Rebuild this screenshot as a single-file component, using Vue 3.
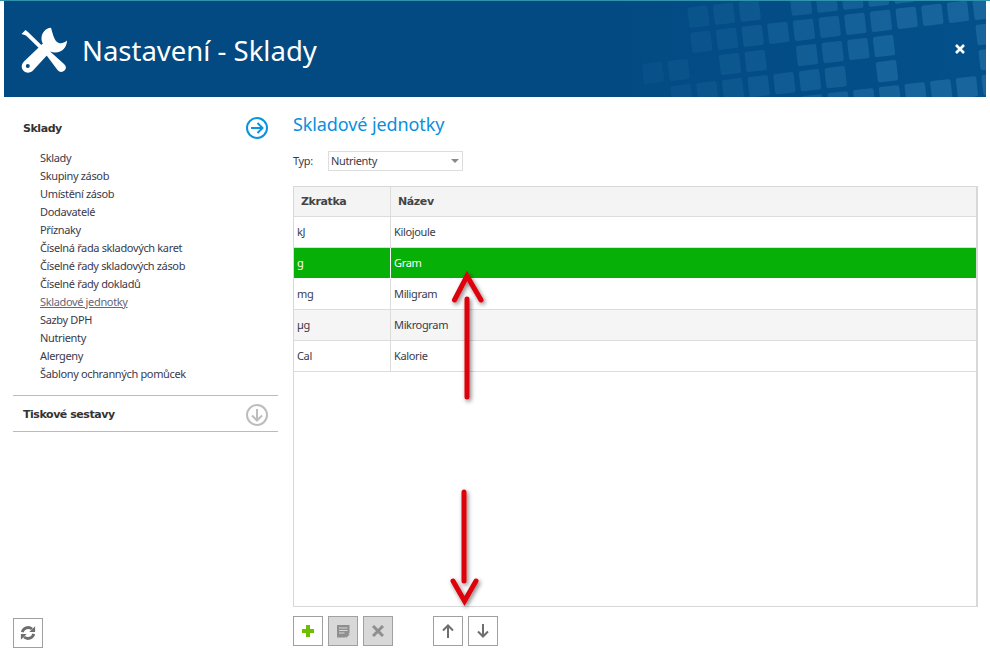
<script setup>
const menu = [
  'Sklady', 'Skupiny zásob', 'Umístění zásob', 'Dodavatelé', 'Příznaky',
  'Číselná řada skladových karet', 'Číselné řady skladových zásob', 'Číselné řady dokladů',
  'Skladové jednotky', 'Sazby DPH', 'Nutrienty', 'Alergeny', 'Šablony ochranných pomůcek'
]
const rows = [
  { code: 'kJ', name: 'Kilojoule', kind: '' },
  { code: 'g', name: 'Gram', kind: 'selected' },
  { code: 'mg', name: 'Miligram', kind: '' },
  { code: 'µg', name: 'Mikrogram', kind: 'striped' },
  { code: 'Cal', name: 'Kalorie', kind: '' }
]
const lattice = [
  [0, [0, 1, 2, 4, 5, 6, 7, 8]],
  [1, [0, 1, 2, 3, 4, 5, 6, 7, 8, 9, 10, 11]],
  [2, [-2, -1, 1, 2, 4, 5, 6, 7, 11]],
  [3, [-1, 0, 1, 2, 3, 4, 5, 7, 11]],
  [4, [4, 5, 6, 7, 8, 9, 10, 11]]
]
const squares = lattice.flatMap(([j, list]) => list.map((i) => {
  const x = 660 + (115 + 77 * i + 9 * j) / 3
  const y = (50 - 9 * i + 75.5 * j) / 3 - 1
  return { x, y, o: Math.min(0.46, 0.12 + (x - 660) * 0.0014) }
}))
</script>

<template>
  <div class="page">
    <div class="strip"></div>
    <header class="hero">
      <svg class="pattern" viewBox="0 0 982 96" width="982" height="96" aria-hidden="true">
        <rect
          v-for="(s, n) in squares"
          :key="n"
          :x="s.x - 4 - 10.25"
          :y="s.y - 10.25"
          width="20.5"
          height="20.5"
          rx="2.2"
          fill="#2f7fb3"
          :opacity="s.o"
          :transform="`rotate(-6.6 ${s.x - 4} ${s.y})`"
        />
      </svg>
      <svg class="tools" viewBox="0 0 46 46" width="46" height="46" aria-hidden="true">
        <path d="M0.5 7 L4.5 3 L7 5 L25 22.5 L22.5 25.5 L5 8.5 Z" fill="#fff" />
        <path d="M24.5 27 L28 23.5 L43 37 C45.5 39.5 45.5 41.5 43.5 43.5 C41.5 45.5 38.5 45.5 36.5 43 Z" fill="#fff" />
        <path d="M30 0.7 C24.5 1 20.5 6 20.5 11.5 C20.5 13.5 21 15 21.8 16.5 L3 34.5 C0 37.5 0 41.5 2.7 44 C5.5 46.5 9.5 46 12 43.5 L29.5 24.5 C31 25.2 33 25.5 34.5 25.5 C41 25.5 46 20 46 13.5 C42 17 38 17 35.5 14.5 C33 12 31.5 6 30 0.7 Z" fill="#fff" />
        <circle cx="6.8" cy="39" r="2" fill="#034a82" />
      </svg>
      <h1 class="title">Nastavení - Sklady</h1>
      <svg class="close" viewBox="0 0 10 10" width="10" height="10" aria-hidden="true">
        <path d="M1 1 L9 9 M9 1 L1 9" stroke="#fff" stroke-width="2.6" />
      </svg>
    </header>

    <div class="body">
      <aside class="side">
        <div class="side-top">
          <div class="section-head open">
            <span class="section-title">Sklady</span>
            <svg viewBox="0 0 24 24" width="24" height="24" aria-hidden="true">
              <circle cx="12" cy="12" r="10" fill="none" stroke="#0a94de" stroke-width="2" />
              <path d="M6 12 H17 M12.5 7 L17.5 12 L12.5 17" fill="none" stroke="#0a94de" stroke-width="2" />
            </svg>
          </div>
          <ul class="menu">
            <li v-for="item in menu" :key="item" :class="{ active: item === 'Skladové jednotky' }">{{ item }}</li>
          </ul>
          <div class="section-head closed">
            <span class="section-title">Tiskové sestavy</span>
            <svg viewBox="0 0 24 24" width="24" height="24" aria-hidden="true">
              <circle cx="12" cy="12" r="10" fill="none" stroke="#bdbdbd" stroke-width="2" />
              <path d="M12 6 V17 M7 12.5 L12 17.5 L17 12.5" fill="none" stroke="#bdbdbd" stroke-width="2" />
            </svg>
          </div>
        </div>
        <button class="btn refresh" type="button" aria-label="Obnovit">
          <svg viewBox="0 0 18 18" width="16" height="16">
            <path d="M2.5 8 A6.8 6.8 0 0 1 13.5 4.5 M15.5 10 A6.8 6.8 0 0 1 4.5 13.5" fill="none" stroke="#6e6e6e" stroke-width="3.2" />
            <path d="M17 1.5 V8 H10.5 Z M1 16.5 V10 H7.5 Z" fill="#6e6e6e" />
          </svg>
        </button>
      </aside>

      <main class="main">
        <h2 class="heading">Skladové jednotky</h2>
        <div class="filter">
          <label class="filter-label">Typ:</label>
          <div class="select">
            <span>Nutrienty</span>
            <i class="caret"></i>
          </div>
        </div>
        <div class="table">
          <div class="row head">
            <div class="cell first">Zkratka</div>
            <div class="cell">Název</div>
          </div>
          <div v-for="r in rows" :key="r.code" class="row" :class="r.kind">
            <div class="cell first">{{ r.code }}</div>
            <div class="cell">{{ r.name }}</div>
          </div>
        </div>
        <div class="toolbar">
          <button class="btn" type="button" aria-label="Přidat">
            <svg viewBox="0 0 12 12" width="12" height="12"><path d="M4 0 H8 V4 H12 V8 H8 V12 H4 V8 H0 V4 H4 Z" fill="#6fbf00" /></svg>
          </button>
          <button class="btn off" type="button" aria-label="Upravit">
            <svg viewBox="0 0 13 13" width="13" height="13">
              <path d="M0 0 H12.5 V8 L8 12.5 H0 Z" fill="#8f8f8f" />
              <path d="M2 3 H10.5 M2 5.5 H10.5 M2 8 H7.5" stroke="#d8d8d8" stroke-width="1" />
              <path d="M9 13 V9.3 H13 Z" fill="#8f8f8f" />
            </svg>
          </button>
          <button class="btn off" type="button" aria-label="Smazat">
            <svg viewBox="0 0 12 12" width="12" height="12"><path d="M1 1 L11 11 M11 1 L1 11" stroke="#8f8f8f" stroke-width="3" /></svg>
          </button>
          <button class="btn move" type="button" aria-label="Nahoru">
            <svg viewBox="0 0 12 14" width="12" height="14"><path d="M6 14 V2 M1 6.5 L6 1.5 L11 6.5" fill="none" stroke="#6e6e6e" stroke-width="2" /></svg>
          </button>
          <button class="btn" type="button" aria-label="Dolů">
            <svg viewBox="0 0 12 14" width="12" height="14"><path d="M6 0 V12 M1 7.5 L6 12.5 L11 7.5" fill="none" stroke="#6e6e6e" stroke-width="2" /></svg>
          </button>
        </div>
      </main>
    </div>

    <svg class="marks" viewBox="0 0 990 658" width="990" height="658" aria-hidden="true">
      <defs>
        <filter id="soft" x="-60%" y="-20%" width="220%" height="140%">
          <feDropShadow dx="1.5" dy="2" stdDeviation="2" flood-color="#000" flood-opacity="0.5" />
        </filter>
      </defs>
      <g filter="url(#soft)" fill="none" stroke="#dd0008" stroke-width="5" stroke-linecap="round" stroke-linejoin="miter">
        <path d="M467 299 L467 397" />
        <path d="M454.5 300 L467 276 L481 300" />
        <path d="M464 492 L464 581" />
        <path d="M453 581 L464.5 601 L476 581" />
      </g>
    </svg>
  </div>
</template>

<style scoped>
.page {
  position: relative;
  width: 990px;
  height: 658px;
  overflow: hidden;
  background: #fff;
  color: #3a3a4a;
  font-family: "Noto Sans", "Liberation Sans", sans-serif;
  font-size: 11px;
  letter-spacing: -0.35px;
  display: flex;
  flex-direction: column;
}
.strip {
  height: 1px;
  background: #2e94ad;
}
.hero {
  position: relative;
  height: 96px;
  margin: 0 4px;
  background: linear-gradient(90deg, #034a82 0%, #034a82 60%, #03508b 100%);
  display: flex;
  align-items: center;
  padding-left: 17px;
  flex: none;
}
.pattern {
  position: absolute;
  left: 0;
  top: 0;
}
.tools {
  position: relative;
  flex: none;
  margin-top: 2px;
}
.title {
  position: relative;
  margin: 3px 0 0 15px;
  font-size: 27.5px;
  font-weight: 400;
  letter-spacing: 0;
  color: #fff;
  line-height: 1;
  flex: 1;
}
.close {
  position: relative;
  margin-right: 21px;
  flex: none;
}
.body {
  flex: 1;
  display: flex;
  min-height: 0;
}
.side {
  width: 265px;
  margin-left: 13px;
  flex: none;
  display: flex;
  flex-direction: column;
  justify-content: space-between;
  padding-bottom: 10px;
}
.section-head {
  display: flex;
  align-items: center;
  justify-content: space-between;
  padding: 0 9px 0 10px;
}
.section-head.open {
  height: 24px;
  margin-top: 19px;
}
.section-head.closed {
  height: 33px;
  padding-top: 2px;
  border-top: 1px solid #bbb;
  border-bottom: 1px solid #bbb;
}
.section-title {
  font-family: "DejaVu Sans", sans-serif;
  font-weight: 700;
  font-size: 11px;
  letter-spacing: -0.45px;
  color: #333;
}
.menu {
  list-style: none;
  margin: 9px 0 12px;
  padding: 0 0 0 27px;
}
.menu li {
  height: 18px;
  line-height: 18px;
  white-space: nowrap;
}
.menu li.active {
  color: #66667a;
  text-decoration: underline;
}
.main {
  flex: 1;
  margin-left: 15px;
  margin-right: 12px;
  display: flex;
  flex-direction: column;
  min-width: 0;
  padding-bottom: 12px;
}
.heading {
  margin: 16px 0 0;
  font-size: 18px;
  line-height: 22px;
  font-weight: 400;
  letter-spacing: -0.1px;
  color: #0a8fdc;
}
.filter {
  display: flex;
  align-items: center;
  margin-top: 16px;
  height: 20px;
}
.filter-label {
  width: 35px;
  padding-bottom: 2px;
}
.select {
  width: 135px;
  height: 20px;
  box-sizing: border-box;
  border: 1px solid #ddd;
  padding-left: 2px;
  padding-bottom: 2px;
  line-height: 15px;
  display: flex;
  align-items: center;
  justify-content: space-between;
}
.caret {
  width: 0;
  height: 0;
  border-left: 4px solid transparent;
  border-right: 4px solid transparent;
  border-top: 4px solid #888;
  margin-right: 3px;
  margin-top: 2px;
}
.table {
  margin-top: 15px;
  height: 421px;
  box-sizing: border-box;
  border: 1px solid #d8d8d8;
  border-right-width: 2px;
  flex: none;
}
.row {
  display: flex;
  height: 31px;
  box-sizing: border-box;
  border-bottom: 1px solid #dcdcdc;
  line-height: 30px;
}
.row.head {
  height: 30px;
  background: #f4f4f4;
  font-family: "DejaVu Sans", sans-serif;
  font-weight: 700;
  font-size: 11px;
  letter-spacing: -0.4px;
  color: #444;
}
.row.head .cell {
  padding-left: 7px;
}
.row.selected {
  background: #07b007;
  color: #fff;
  border-bottom-color: #fff;
}
.row.striped {
  background: #f5f5f5;
}
.cell {
  flex: 1;
  padding-left: 3px;
}
.cell.first {
  flex: none;
  width: 97px;
  box-sizing: border-box;
  border-right: 1px solid #dcdcdc;
}
.row.selected .cell.first {
  border-right-color: #fff;
}
.toolbar {
  display: flex;
  gap: 5px;
  margin-top: 9px;
}
.btn {
  width: 30px;
  height: 30px;
  padding: 0;
  box-sizing: border-box;
  border: 1px solid #a0a0a0;
  background: #fff;
  display: flex;
  align-items: center;
  justify-content: center;
}
.btn.off {
  background: #d8d8d8;
}
.btn.move {
  margin-left: 35px;
}
.marks {
  position: absolute;
  left: 0;
  top: 0;
  pointer-events: none;
}
</style>
